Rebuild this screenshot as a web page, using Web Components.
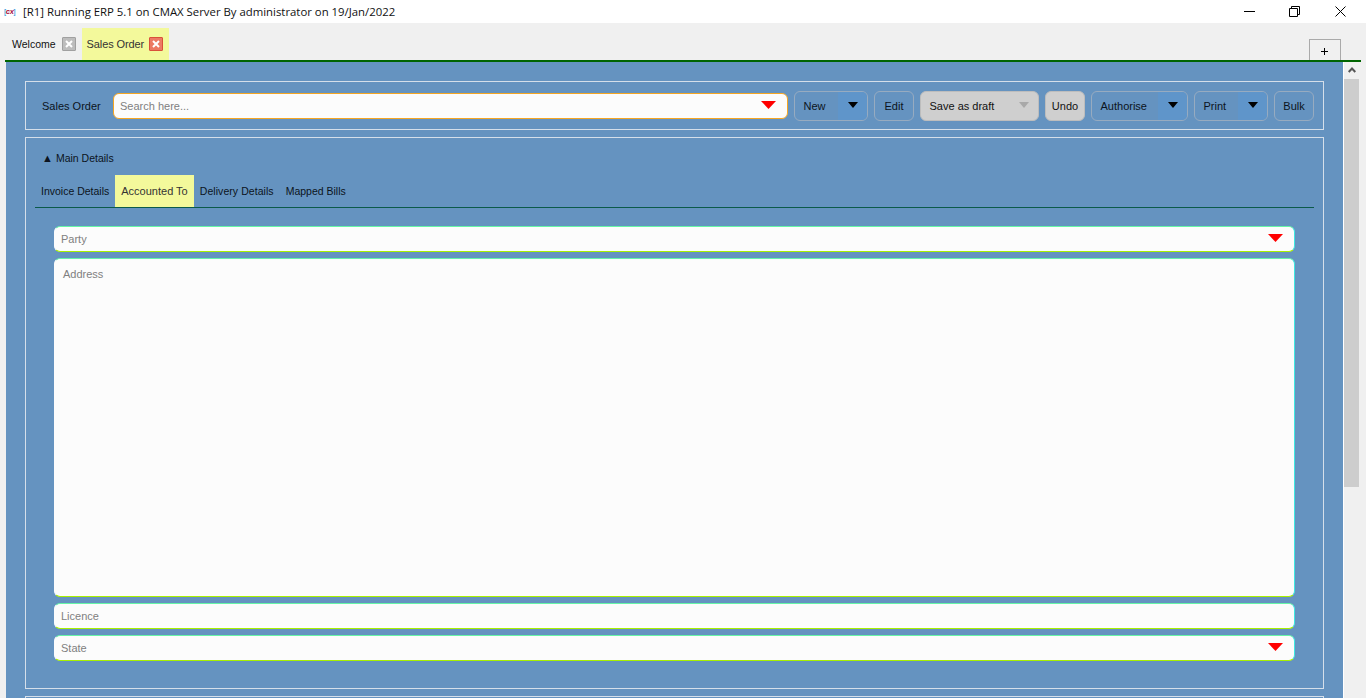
<!DOCTYPE html>
<html>
<head>
<meta charset="utf-8">
<title>ERP</title>
<style>
  html, body { margin: 0; height: 698px; overflow: hidden; background: #f0f0f0; }
  body { font-family: "Liberation Sans", Arial, sans-serif; font-size: 11px; display: flex; flex-direction: column; }
</style>
</head>
<body>
<erp-titlebar>[R1] Running ERP 5.1 on CMAX Server By administrator on 19/Jan/2022</erp-titlebar>
<erp-tabbar>
  <erp-tab>Welcome</erp-tab>
  <erp-tab active>Sales Order</erp-tab>
</erp-tabbar>
<erp-workspace>
  <erp-section>
    <erp-toolbar>
      <span slot="label">Sales Order</span>
      <erp-button slot="actions" split style="width:74px">New</erp-button>
      <erp-button slot="actions" style="width:40px">Edit</erp-button>
      <erp-button slot="actions" disabled split style="width:119px">Save as draft</erp-button>
      <erp-button slot="actions" disabled style="width:40px">Undo</erp-button>
      <erp-button slot="actions" split style="width:97px">Authorise</erp-button>
      <erp-button slot="actions" split style="width:74px">Print</erp-button>
      <erp-button slot="actions" style="width:40px">Bulk</erp-button>
    </erp-toolbar>
  </erp-section>
  <erp-section>
    <erp-details>
      <span slot="title">Main Details</span>
      <erp-subtab slot="tabs">Invoice Details</erp-subtab>
      <erp-subtab slot="tabs" active>Accounted To</erp-subtab>
      <erp-subtab slot="tabs" style="letter-spacing:.06px">Delivery Details</erp-subtab>
      <erp-subtab slot="tabs">Mapped Bills</erp-subtab>
      <erp-field dropdown>Party</erp-field>
      <erp-field area>Address</erp-field>
      <erp-field>Licence</erp-field>
      <erp-field dropdown>State</erp-field>
    </erp-details>
  </erp-section>
  <erp-section></erp-section>
</erp-workspace>

<script>
  // triangle used by every dropdown, colour and size come from the caller
  const arrow = (w, h, color) =>
    `<svg width="${w}" height="${h}" viewBox="0 0 ${w} ${h}"><polygon points="0,0 ${w},0 ${w / 2},${h}" fill="${color}"/></svg>`;

  class ErpTitlebar extends HTMLElement {
    connectedCallback() {
      this.attachShadow({ mode: 'open' });
      this.shadowRoot.innerHTML = `
        <style>
          :host { display: flex; align-items: center; height: 23px; background: #fff; flex: none; }
          .logo { width: 12px; margin-left: 4px; font: italic bold 7.5px "Liberation Sans", sans-serif; color: #a80c3c; letter-spacing: -0.3px; white-space: nowrap; }
          .logo b { color: #0a84d8; font-style: normal; font-weight: normal; }
          .title { margin-left: 7px; font: 11.36px "Open Sans", sans-serif; color: #111; flex: 1; white-space: nowrap; }
          .controls { display: flex; align-items: center; }
          svg { display: block; }
        </style>
        <span class="logo"><b>[</b>cx<b>]</b></span>
        <span class="title"><slot></slot></span>
        <div class="controls">
          <svg width="11" height="11" viewBox="0 0 11 11" style="margin-right:34px"><path d="M0 5.5H11" stroke="#000" fill="none"/></svg>
          <svg width="11" height="11" viewBox="0 0 11 11" style="margin-right:35px"><path d="M.5 2.5h8v8h-8zM2.5 2.5v-2h8v8h-2" stroke="#000" fill="none"/></svg>
          <svg width="11" height="11" viewBox="0 0 11 11" style="margin-right:20px"><path d="M.5 .5L10.5 10.5M10.5 .5L.5 10.5" stroke="#000" fill="none"/></svg>
        </div>`;
    }
  }

  class ErpTabbar extends HTMLElement {
    connectedCallback() {
      this.attachShadow({ mode: 'open' });
      this.shadowRoot.innerHTML = `
        <style>
          :host { display: flex; align-items: flex-end; height: 37px; margin: 0 5px; padding: 0 20px 0 1px; border-bottom: 2px solid #006400; flex: none; }
          .add { margin-left: auto; width: 30px; height: 20px; border: 1px solid #aaa; border-bottom: 0; display: flex; align-items: center; justify-content: center; }
          svg { display: block; margin: 2px 1px 0 0; }
        </style>
        <slot></slot>
        <div class="add"><svg width="7" height="7" viewBox="0 0 7 7"><path d="M0 3.5H7M3.5 0V7" stroke="#000" fill="none"/></svg></div>`;
    }
  }

  class ErpTab extends HTMLElement {
    connectedCallback() {
      this.attachShadow({ mode: 'open' });
      this.shadowRoot.innerHTML = `
        <style>
          :host { display: flex; align-items: center; gap: 6px; height: 32px; padding: 0 6px; color: #111; font-size: 10.5px; }
          :host([active]) { background: #f3f99b; padding: 0 6px 0 5px; gap: 5px; font-size: 11px; letter-spacing: -0.1px; color: #333; }
          .close { width: 12px; height: 12px; border: 1px solid #a0a0a0; background: #bdbdbd; display: flex; border-radius: 1px; }
          :host([active]) .close { border-color: #d9503a; background: #ec7a63; }
          svg { margin: auto; display: block; }
        </style>
        <slot></slot>
        <span class="close"><svg width="8" height="8" viewBox="0 0 8 8"><path d="M1 1L7 7M7 1L1 7" stroke="#fff" stroke-width="2"/></svg></span>`;
    }
  }

  class ErpWorkspace extends HTMLElement {
    connectedCallback() {
      this.attachShadow({ mode: 'open' });
      this.shadowRoot.innerHTML = `
        <style>
          :host { display: flex; flex: 1; min-height: 0; padding: 0 6px; }
          .panel { width: 1337px; box-sizing: border-box; background: #6593c0; padding: 19px 19px 0; display: flex; flex-direction: column; gap: 7px; overflow: hidden; flex: none; }
          .bar { width: 16px; margin-left: 1px; flex: none; box-shadow: -1px 0 0 #fff; }
          .up { height: 17px; display: flex; align-items: center; justify-content: center; }
          .thumb { height: 408px; background: #cdcdcd; width: 15px; }
          svg { display: block; margin-top: -1px; }
        </style>
        <div class="panel"><slot></slot></div>
        <div class="bar">
          <div class="up"><svg width="8" height="6" viewBox="0 0 8 6"><path d="M.7 5L4 1.5L7.3 5" stroke="#555" stroke-width="2" fill="none"/></svg></div>
          <div class="thumb"></div>
        </div>`;
    }
  }

  class ErpSection extends HTMLElement {
    connectedCallback() {
      this.attachShadow({ mode: 'open' });
      this.shadowRoot.innerHTML = `
        <style>
          :host { display: block; flex: none; border: 1px solid #d5dfea; min-height: 40px; }
        </style>
        <slot></slot>`;
    }
  }

  class ErpToolbar extends HTMLElement {
    connectedCallback() {
      this.attachShadow({ mode: 'open' });
      this.shadowRoot.innerHTML = `
        <style>
          :host { display: flex; align-items: center; height: 47px; padding: 0 9px 0 16px; color: #0c1420; }
          .label { width: 71px; flex: none; }
          .search { width: 675px; height: 26px; box-sizing: border-box; flex: none; background: #fcfcfc; border: 1px solid #f5a623; border-radius: 6px; display: flex; align-items: center; padding: 0 11px 0 6px; color: #808080; justify-content: space-between; }
          .search svg { display: block; margin-top: -2px; }
          .actions { display: flex; gap: 6px; margin-left: 6px; }
        </style>
        <div class="label"><slot name="label"></slot></div>
        <div class="search"><span>Search here...</span>${arrow(15, 8, '#f00')}</div>
        <div class="actions"><slot name="actions"></slot></div>`;
    }
  }

  class ErpButton extends HTMLElement {
    connectedCallback() {
      this.attachShadow({ mode: 'open' });
      const split = this.hasAttribute('split');
      const off = this.hasAttribute('disabled');
      this.shadowRoot.innerHTML = `
        <style>
          :host { display: flex; height: 30px; box-sizing: border-box; border: 1px solid #97abc0; border-radius: 6px; color: #0c1420; overflow: hidden; flex: none; }
          :host([disabled]) { background: #cfcfcf; border-color: #bdbdbd; color: #111; }
          .text { flex: 1; display: flex; align-items: center; justify-content: ${split ? 'flex-start' : 'center'}; padding-left: ${split ? '8.5px' : '0'}; }
          .menu { width: 29px; display: flex; align-items: center; justify-content: center; background: ${off ? 'transparent' : '#5f95ca'}; }
          svg { display: block; margin-top: -2px; }
        </style>
        <div class="text"><slot></slot></div>
        ${split ? `<div class="menu">${arrow(10, 6, off ? '#a9a9a9' : '#000')}</div>` : ''}`;
    }
  }

  class ErpDetails extends HTMLElement {
    connectedCallback() {
      this.attachShadow({ mode: 'open' });
      this.shadowRoot.innerHTML = `
        <style>
          :host { display: block; height: 550px; box-sizing: border-box; padding: 0 9px; color: #0c1420; }
          .head { height: 37px; padding: 2px 0 0 7px; display: flex; align-items: center; gap: 3px; box-sizing: border-box; font-size: 10.5px; }
          .tri { font-size: 11px; }
          .tabs { display: flex; height: 33px; box-sizing: border-box; border-bottom: 1px solid #0b5a4a; }
          .body { display: flex; flex-direction: column; gap: 6px; padding: 18px 19px 0; }
        </style>
        <div class="head"><span class="tri">&#9650;</span><slot name="title"></slot></div>
        <div class="tabs"><slot name="tabs"></slot></div>
        <div class="body"><slot></slot></div>`;
    }
  }

  class ErpSubtab extends HTMLElement {
    connectedCallback() {
      this.attachShadow({ mode: 'open' });
      this.shadowRoot.innerHTML = `
        <style>
          :host { display: flex; align-items: center; padding: 0 6px; color: #0c1420; font-size: 10.5px; }
          :host([active]) { background: #f3f99b; color: #333; font-size: 11px; }
        </style>
        <slot></slot>`;
    }
  }

  class ErpField extends HTMLElement {
    connectedCallback() {
      this.attachShadow({ mode: 'open' });
      this.shadowRoot.innerHTML = `
        <style>
          :host { display: flex; align-items: center; justify-content: space-between; height: 26px; box-sizing: border-box; padding: 0 11px 0 6px; background: #fcfcfc; color: #808080; border-radius: 6px; border: 1px solid #fcfcfc; border-top-color: #66f5a8; border-bottom-color: #a8f000; border-right-color: #3fe8e0; flex: none; }
          :host([area]) { height: 339px; align-items: flex-start; padding: 9px 8px 0 8px; }
          svg { display: block; margin-top: -3px; }
        </style>
        <span><slot></slot></span>
        ${this.hasAttribute('dropdown') ? arrow(15, 8, '#f00') : ''}`;
    }
  }

  customElements.define('erp-titlebar', ErpTitlebar);
  customElements.define('erp-tabbar', ErpTabbar);
  customElements.define('erp-tab', ErpTab);
  customElements.define('erp-workspace', ErpWorkspace);
  customElements.define('erp-section', ErpSection);
  customElements.define('erp-toolbar', ErpToolbar);
  customElements.define('erp-button', ErpButton);
  customElements.define('erp-details', ErpDetails);
  customElements.define('erp-subtab', ErpSubtab);
  customElements.define('erp-field', ErpField);
</script>
</body>
</html>
